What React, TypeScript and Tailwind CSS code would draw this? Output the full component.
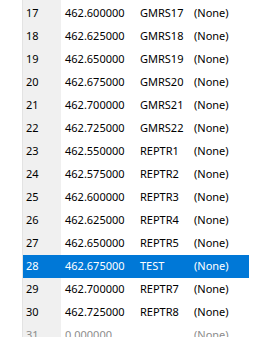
import React from 'react';

interface Channel {
    n: number;
    freq: string;
    name: string;
    tone: string;
}

const channels: Channel[] = [
    { n: 17, freq: '462.600000', name: 'GMRS17', tone: '(None)' },
    { n: 18, freq: '462.625000', name: 'GMRS18', tone: '(None)' },
    { n: 19, freq: '462.650000', name: 'GMRS19', tone: '(None)' },
    { n: 20, freq: '462.675000', name: 'GMRS20', tone: '(None)' },
    { n: 21, freq: '462.700000', name: 'GMRS21', tone: '(None)' },
    { n: 22, freq: '462.725000', name: 'GMRS22', tone: '(None)' },
    { n: 23, freq: '462.550000', name: 'REPTR1', tone: '(None)' },
    { n: 24, freq: '462.575000', name: 'REPTR2', tone: '(None)' },
    { n: 25, freq: '462.600000', name: 'REPTR3', tone: '(None)' },
    { n: 26, freq: '462.625000', name: 'REPTR4', tone: '(None)' },
    { n: 27, freq: '462.650000', name: 'REPTR5', tone: '(None)' },
    { n: 28, freq: '462.675000', name: 'TEST', tone: '(None)' },
    { n: 29, freq: '462.700000', name: 'REPTR7', tone: '(None)' },
    { n: 30, freq: '462.725000', name: 'REPTR8', tone: '(None)' },
    { n: 31, freq: '0.000000', name: '', tone: '(None)' },
];

export default function App() {
    const selected = 28;

    return (
        <div
            className="w-[254px] h-[337px] overflow-hidden bg-white flex text-[11px] text-black"
            style={{ fontFamily: '"Noto Sans", "Open Sans", sans-serif' }}
        >
            {/* blank gutter left of the grid */}
            <div className="w-[23px] shrink-0 border-r border-[#e3e3e3]" />

            <div className="flex-1 relative bg-[#f0f0f0]">
                <div className="absolute inset-y-0 left-[38px] right-0 bg-white" />
                <div className="relative mt-[2px]">
                    {channels.map((c) => {
                        const isSel = c.n === selected;
                        const faded = c.n === 31;
                        return (
                            <div
                                key={c.n}
                                className={`flex items-center h-[23px] w-[226px] ${
                                    isSel ? 'bg-[#0078d7] text-white' : ''
                                } ${faded ? 'text-[#8c8c8c]' : ''}`}
                            >
                                <div className="w-[38px] pl-[3px] shrink-0">{c.n}</div>
                                <div className="w-[79px] pl-[4px] shrink-0">{c.freq}</div>
                                <div className="w-[54px] shrink-0">{c.name}</div>
                                <div className="flex-1">{c.tone}</div>
                            </div>
                        );
                    })}
                </div>
            </div>
        </div>
    );
}
